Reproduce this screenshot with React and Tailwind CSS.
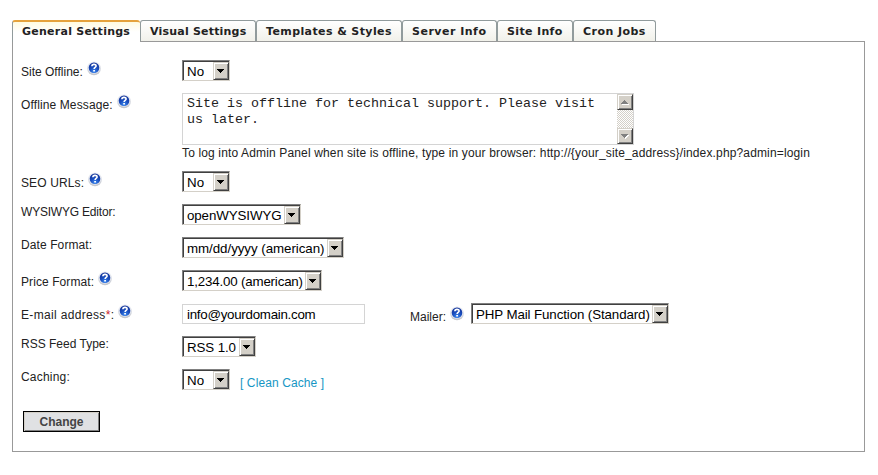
import React from 'react';

const Help = () => (
  <svg className="ml-1 block h-[15px] w-[15px] shrink-0" viewBox="0 0 15 15">
    <defs>
      <radialGradient id="ball" cx="0.5" cy="0.85" r="0.85">
        <stop offset="0" stopColor="#3f8cf0" />
        <stop offset="0.45" stopColor="#1a4fc0" />
        <stop offset="1" stopColor="#143296" />
      </radialGradient>
      <linearGradient id="rim" x1="0" y1="0" x2="0" y2="1">
        <stop offset="0" stopColor="#f1f3f8" />
        <stop offset="0.6" stopColor="#d6d9e0" />
        <stop offset="1" stopColor="#bfc2c9" />
      </linearGradient>
    </defs>
    <circle cx="7" cy="7.4" r="6.9" fill="url(#rim)" />
    <circle cx="7" cy="6.8" r="6" fill="#e3e7f1" />
    <circle cx="7" cy="6.7" r="5.3" fill="url(#ball)" />
    <path d="M4.9 5.2C4.9 2.8 9.1 2.8 9.1 5C9.1 6.5 7.1 6.4 7.1 8.1" fill="none" stroke="#fff" strokeWidth="1.6" />
    <rect x="6.2" y="9" width="1.8" height="1.5" fill="#fff" />
  </svg>
);

const Arrow = ({ up, fill = '#000' }) => (
  <svg className="block h-[4px] w-[7px]" viewBox="0 0 7 4" shapeRendering="crispEdges">
    <path d={up ? 'M3 0h1v1h1v1h1v1h1v1H0V3h1V2h1V1h1z' : 'M0 0h7v1H6v1H5v1H4v1H3V3H2V2H1V1H0z'} fill={fill} />
  </svg>
);

const Select = ({ width, tracking = '', children }) => (
  <div className={`flex h-[21px] shrink-0 border border-t-[#808080] border-l-[#808080] border-r-[#d4d0c8] border-b-[#d4d0c8] ${width}`}>
    <div className="flex min-w-0 flex-1 border-t border-l border-[#404040] bg-white">
      <span className={`min-w-0 flex-1 pl-[3px] text-[13.33px] leading-[19px] whitespace-nowrap text-black ${tracking}`}>{children}</span>
      <span className="flex h-[18px] w-4 shrink-0 items-center border border-t-[#d4d0c8] border-l-[#d4d0c8] border-r-[#404040] border-b-[#404040] bg-[#d4d0c8] pl-[3px] shadow-[inset_1px_1px_0_#fff,inset_-1px_-1px_0_#808080]">
        <Arrow />
      </span>
    </div>
  </div>
);

const Row = ({ label, required, help, height = 'h-[33px]', tracking = '', children }) => (
  <div className={`flex items-start ${height}`}>
    <div className={`flex w-[161px] shrink-0 items-start ${help ? 'pt-px' : ''}`}>
      <span className={`text-xs leading-4 whitespace-nowrap ${help ? 'mt-[3px]' : ''} ${tracking}`}>
        {label}
        {required && <span className="text-[#c8202c]">*</span>}:
      </span>
      {help && <Help />}
    </div>
    {children}
  </div>
);

const tabs = [
  ['General Settings', 'w-[128px] tracking-[0.25px]'],
  ['Visual Settings', 'w-[116px] tracking-[0.2px]'],
  ['Templates & Styles', 'w-[146px] tracking-[0.4px]'],
  ['Server Info', 'w-[95px] tracking-[0.5px]'],
  ['Site Info', 'w-[76px] tracking-[0.35px]'],
  ['Cron Jobs', 'w-[83px] tracking-[0.45px]'],
];

const ScrollButton = ({ up }) => (
  <span className="flex h-4 w-4 items-center border border-t-[#d4d0c8] border-l-[#d4d0c8] border-r-[#404040] border-b-[#404040] bg-[#d4d0c8] pl-[3px] shadow-[inset_1px_1px_0_#fff,inset_-1px_-1px_0_#808080]">
    <span className="drop-shadow-[1px_1px_0_#fff]">
      <Arrow up={up} fill="#808080" />
    </span>
  </span>
);

export default function App() {
  return (
    <main className="h-[475px] w-[878px] overflow-hidden bg-white pt-5 pl-3 font-['Liberation_Sans',Arial,sans-serif] text-[#222]">
      <nav className="flex h-[21px]">
        {tabs.map(([name, size], i) => (
          <div
            key={name}
            className={`shrink-0 overflow-hidden rounded-t-[3px] pl-[9px] font-['DejaVu_Sans',Verdana,sans-serif] text-[11px] font-bold whitespace-nowrap ${size} ${
              i === 0
                ? 'relative z-10 h-[22px] border-t-2 border-l border-t-[#e5a23c] border-l-[#919b9c] bg-linear-to-b from-[#fffbe0] to-white to-50% leading-[20px]'
                : 'h-[21px] border border-b-0 border-[#919b9c] bg-linear-to-b from-white to-[#f1f1ea] leading-[22px]'
            }`}
          >
            {name}
          </div>
        ))}
      </nav>
      <section className="h-[411px] w-[853px] border border-[#999] pt-[18px] pl-2">
        <Row label="Site Offline" help>
          <Select width="w-[48px]">No</Select>
        </Row>
        <Row label="Offline Message" help height="h-[78px]" tracking="tracking-[0.12px]">
          <div>
            <div className="flex h-[52px] w-[452px] border border-[#d4d4d4]">
              <div className="flex-1 pt-[2px] pl-1 font-['Liberation_Mono','Courier_New',monospace] text-[13.33px] leading-4 whitespace-pre text-[#222]">
                {'Site is offline for technical support. Please visit\nus later.'}
              </div>
              <div className="flex w-4 flex-col justify-between bg-[repeating-conic-gradient(#d4d0c8_0_25%,#fff_0_50%)] bg-size-[2px_2px]">
                <ScrollButton up />
                <ScrollButton />
              </div>
            </div>
            <p className="text-xs leading-4 tracking-[0.145px] whitespace-nowrap">
              To log into Admin Panel when site is offline, type in your browser: http://{'{your_site_address}'}/index.php?admin=login
            </p>
          </div>
        </Row>
        <Row label="SEO URLs" help tracking="tracking-[0.12px]">
          <Select width="w-[48px]">No</Select>
        </Row>
        <Row label="WYSIWYG Editor" tracking="tracking-[-0.2px]">
          <Select width="w-[119px]" tracking="tracking-[-0.1px]">openWYSIWYG</Select>
        </Row>
        <Row label="Date Format" tracking="tracking-[0.1px]">
          <Select width="w-[162px]" tracking="tracking-[-0.05px]">mm/dd/yyyy (american)</Select>
        </Row>
        <Row label="Price Format" help tracking="tracking-[0.08px]">
          <Select width="w-[140px]" tracking="tracking-[-0.18px]">1,234.00 (american)</Select>
        </Row>
        <Row label="E-mail address" required help tracking="tracking-[0.33px]">
          <div className="mt-px h-5 w-[183px] border border-[#d4d4d4] pl-1 text-[13.33px] leading-[19px] tracking-[-0.27px] text-black">info@yourdomain.com</div>
          <div className="ml-[45px] flex w-[61px] items-start pt-[3px]">
            <span className="mt-[3px] text-xs leading-4">Mailer:</span>
            <Help />
          </div>
          <Select width="w-[198px]" tracking="tracking-[-0.11px]">PHP Mail Function (Standard)</Select>
        </Row>
        <Row label="RSS Feed Type">
          <Select width="w-[74px]" tracking="tracking-[-0.1px]">RSS 1.0</Select>
        </Row>
        <Row label="Caching" tracking="tracking-[0.2px]">
          <Select width="w-[48px]">No</Select>
          <a className="mt-[6px] ml-[10px] text-xs leading-4 tracking-[0.1px] whitespace-nowrap text-[#1696c4]">[ Clean Cache ]</a>
        </Row>
        <button className="mt-[9px] ml-[2px] block h-[21px] w-[77px] border border-black bg-[#e0e1e3] text-xs leading-[18px] font-bold text-[#444] shadow-[inset_1px_1px_0_#d4d0c8,inset_-1px_-1px_0_#808080]">
          Change
        </button>
      </section>
    </main>
  );
}
